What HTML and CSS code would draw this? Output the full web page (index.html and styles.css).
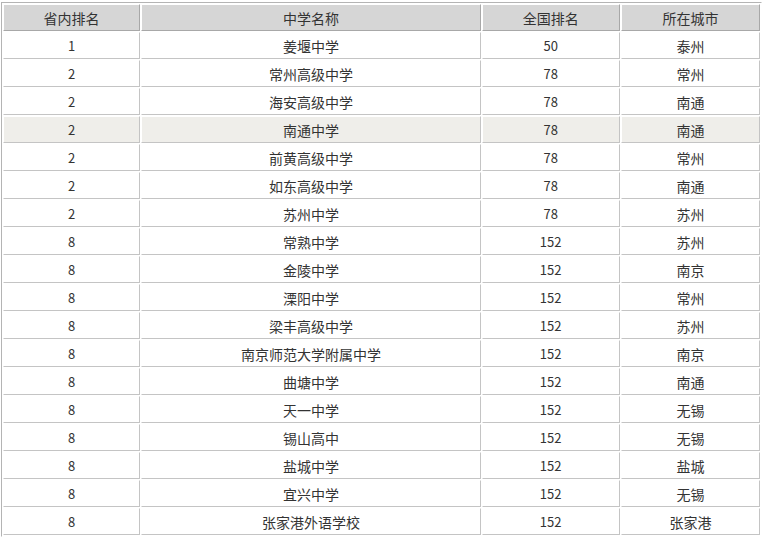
FILE: index.html
```html
<!DOCTYPE html>
<html lang="zh-CN">
<head>
<meta charset="utf-8">
<title>学校排名</title>
<link rel="stylesheet" href="styles.css">
</head>
<body>
<table class="rank">
  <colgroup>
    <col class="c1"><col class="c2"><col class="c3"><col class="c4">
  </colgroup>
  <thead>
    <tr><th>省内排名</th><th>中学名称</th><th>全国排名</th><th>所在城市</th></tr>
  </thead>
  <tbody>
    <tr><td class="num">1</td><td>姜堰中学</td><td class="num">50</td><td>泰州</td></tr>
    <tr><td class="num">2</td><td>常州高级中学</td><td class="num">78</td><td>常州</td></tr>
    <tr><td class="num">2</td><td>海安高级中学</td><td class="num">78</td><td>南通</td></tr>
    <tr class="hl"><td class="num">2</td><td>南通中学</td><td class="num">78</td><td>南通</td></tr>
    <tr><td class="num">2</td><td>前黄高级中学</td><td class="num">78</td><td>常州</td></tr>
    <tr><td class="num">2</td><td>如东高级中学</td><td class="num">78</td><td>南通</td></tr>
    <tr><td class="num">2</td><td>苏州中学</td><td class="num">78</td><td>苏州</td></tr>
    <tr><td class="num">8</td><td>常熟中学</td><td class="num">152</td><td>苏州</td></tr>
    <tr><td class="num">8</td><td>金陵中学</td><td class="num">152</td><td>南京</td></tr>
    <tr><td class="num">8</td><td>溧阳中学</td><td class="num">152</td><td>常州</td></tr>
    <tr><td class="num">8</td><td>梁丰高级中学</td><td class="num">152</td><td>苏州</td></tr>
    <tr><td class="num">8</td><td>南京师范大学附属中学</td><td class="num">152</td><td>南京</td></tr>
    <tr><td class="num">8</td><td>曲塘中学</td><td class="num">152</td><td>南通</td></tr>
    <tr><td class="num">8</td><td>天一中学</td><td class="num">152</td><td>无锡</td></tr>
    <tr><td class="num">8</td><td>锡山高中</td><td class="num">152</td><td>无锡</td></tr>
    <tr><td class="num">8</td><td>盐城中学</td><td class="num">152</td><td>盐城</td></tr>
    <tr><td class="num">8</td><td>宜兴中学</td><td class="num">152</td><td>无锡</td></tr>
    <tr><td class="num">8</td><td>张家港外语学校</td><td class="num">152</td><td>张家港</td></tr>
  </tbody>
</table>
</body>
</html>
```

FILE: styles.css
```css
html, body {
  background: #ffffff;
}
body {
  margin: 2px 0 0 1px;
  font-family: "Noto Sans CJK SC", "Noto Sans", sans-serif;
  font-size: 14px;
  color: #333333;
}
.rank {
  width: 761px;
  table-layout: fixed;
  border-collapse: separate;
  border-spacing: 1px;
  border-style: solid;
  border-width: 1px;
  border-color: #b4b4b4 #ffffff #ffffff #b4b4b4;
}
.c1 { width: 137px; }
.c2 { width: 339px; }
.c3 { width: 138px; }
.c4 { width: 139px; }
.rank th,
.rank td {
  box-sizing: border-box;
  height: 27px;
  padding: 0;
  text-align: center;
  vertical-align: middle;
  font-weight: normal;
  line-height: 16px;
  border-style: solid;
  border-width: 1px;
  border-color: #ffffff #c4c4c4 #c4c4c4 #ffffff;
}
.rank th {
  background: #d6d6d6;
  color: #333333;
  border-color: #ffffff #a8a8a8 #a8a8a8 #ffffff;
}
.rank td.num {
  font-size: 13px;
}
.rank tr.hl td {
  background: #efeeea;
}
```
